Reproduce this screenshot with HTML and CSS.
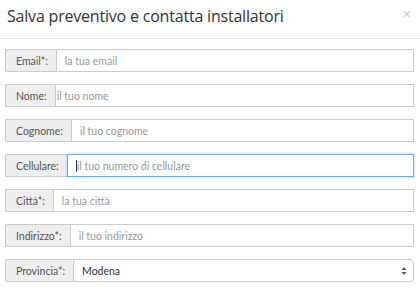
FILE: index.html
```html
<!DOCTYPE html>
<html>
<head>
<meta charset="utf-8">
<link rel="stylesheet" href="styles.css">
</head>
<body>
<div class="modal">
  <div class="modal-header">
    <h4 class="title">Salva preventivo e contatta installatori</h4>
    <span class="close">&times;</span>
  </div>
  <div class="modal-body">
    <div class="group"><span class="addon">Email*:</span><div class="field"><span class="ph">la tua email</span></div></div>
    <div class="group"><span class="addon">Nome:</span><div class="field tight"><span class="ph">il tuo nome</span></div></div>
    <div class="group"><span class="addon">Cognome:</span><div class="field"><span class="ph">il tuo cognome</span></div></div>
    <div class="group"><span class="addon">Cellulare:</span><div class="field focus"><span class="caret"></span><span class="ph">il tuo numero di cellulare</span></div></div>
    <div class="group"><span class="addon">Città*:</span><div class="field"><span class="ph">la tua città</span></div></div>
    <div class="group"><span class="addon">Indirizzo*:</span><div class="field"><span class="ph">il tuo indirizzo</span></div></div>
    <div class="group"><span class="addon">Provincia*:</span><div class="field select"><span class="val">Modena</span>
      <svg class="arrows" width="6" height="10" viewBox="0 0 6 10"><path d="M0.5 4 L3 1 L5.5 4 Z M0.5 6 L3 9 L5.5 6 Z" fill="#555"/></svg></div></div>
  </div>
</div>
</body>
</html>
```
FILE: styles.css
```css
html, body {
  margin: 0;
  padding: 0;
  background: #fff;
}
.modal {
  width: 420px;
  height: 290px;
  overflow: hidden;
  font-family: Lato, "Open Sans", sans-serif;
}
.modal-header {
  height: 39px;
  border-bottom: 1px solid #e8e8e8;
  display: flex;
  align-items: flex-start;
  justify-content: space-between;
  box-sizing: border-box;
  padding: 4px 9px 0 7px;
}
.title {
  margin: 0;
  font-family: "Open Sans", sans-serif;
  font-weight: 400;
  font-size: 16px;
  line-height: 24px;
  color: #333;
  letter-spacing: -0.2px;
}
.close {
  font-family: "Liberation Sans", sans-serif;
  font-size: 14px;
  line-height: 14px;
  color: #c8c8c8;
  margin-top: 3px;
}
.modal-body {
  display: flex;
  flex-direction: column;
  gap: 12px;
  padding: 10px 6px 0 5px;
}
.group {
  display: flex;
  height: 23px;
}
.addon {
  display: flex;
  align-items: center;
  padding: 0 8px 0 10px;
  background: #eee;
  border: 1px solid #ccc;
  border-right: 0;
  border-radius: 2px 0 0 2px;
  font-size: 10.5px;
  color: #555;
  white-space: nowrap;
}
.field {
  flex: 1;
  display: flex;
  align-items: center;
  position: relative;
  border: 1px solid #ccc;
  padding-left: 8px;
  font-size: 10.5px;
  background: #fff;
}
.field.tight {
  padding-left: 1px;
}
.ph {
  color: #999;
}
.field.focus {
  border-color: #66afe9;
  box-shadow: 0 0 3px rgba(102, 175, 233, 0.6);
}
.caret {
  position: absolute;
  left: 8px;
  top: 5px;
  width: 1px;
  height: 12px;
  background: #333;
}
.field.focus .ph {
  margin-left: 1px;
}
.field.select {
  border-radius: 0 4px 4px 0;
  justify-content: space-between;
  padding-right: 6px;
}
.val {
  color: #333;
}
.arrows {
  display: block;
}
```
